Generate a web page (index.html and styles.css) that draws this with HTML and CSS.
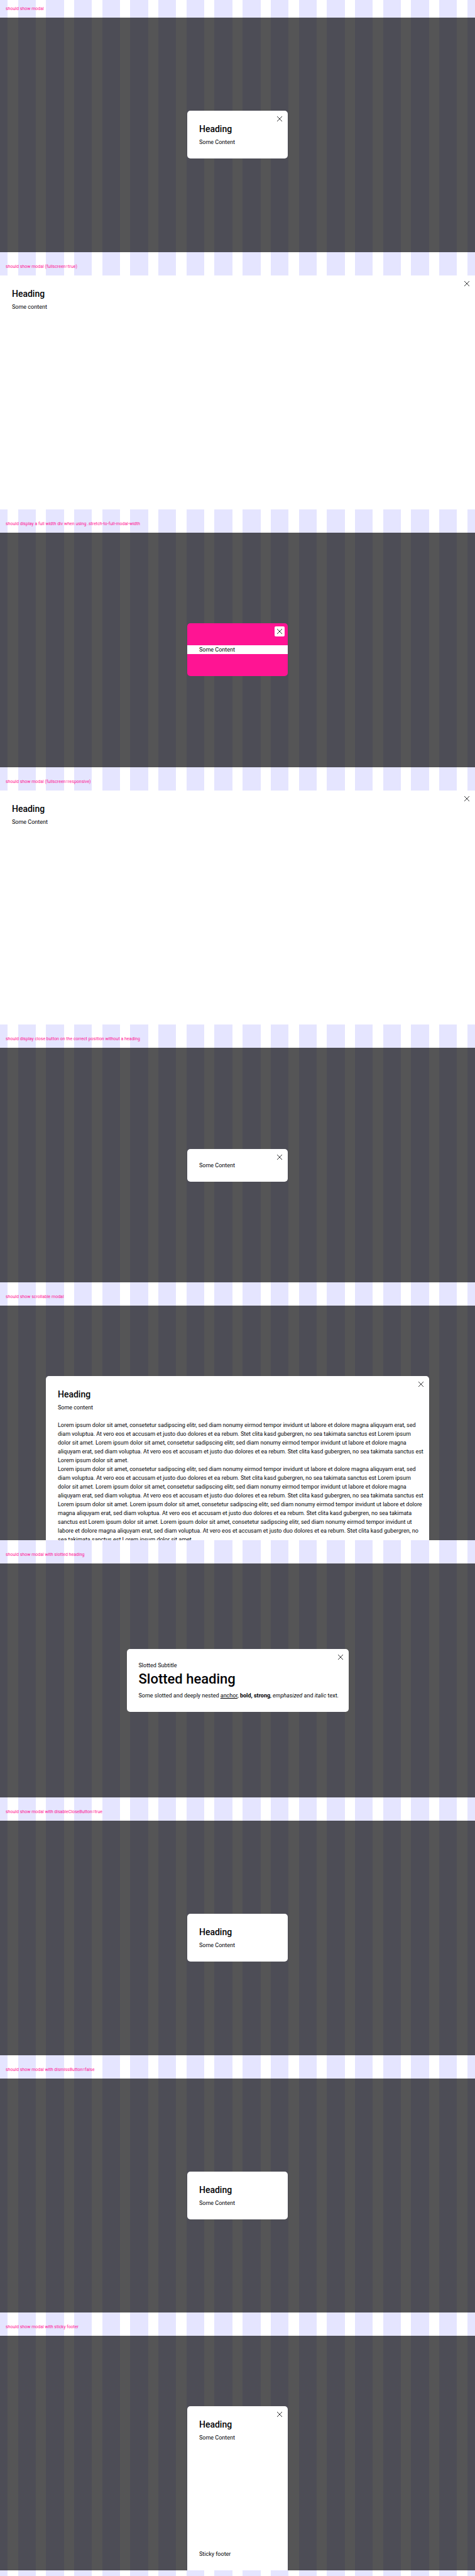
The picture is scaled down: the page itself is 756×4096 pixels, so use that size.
FILE: index.html
```html
<!DOCTYPE html>
<html lang="en">
<head>
<meta charset="utf-8">
<title>Modal states</title>
<link rel="stylesheet" href="styles.css">
</head>
<body>
<svg class="sprite" aria-hidden="true">
  <symbol id="close" viewBox="0 0 16 16"><path d="M4 4l8 8M12 4l-8 8" fill="none" stroke="currentColor" stroke-width="0.8"/></symbol>
</svg>
<main class="playground">
  <section class="case">
    <p class="case-label">should show modal</p>
    <div class="stage">
      <div class="modal" role="dialog" aria-label="Heading">
        <button class="close" type="button" aria-label="Close"><svg><use href="#close"/></svg></button>
        <h2 class="heading">Heading</h2>
        <p class="text">Some Content</p>
      </div>
    </div>
  </section>
  <section class="case">
    <p class="case-label">should show modal (fullscreen=true)</p>
    <div class="stage">
      <div class="modal modal-fullscreen" role="dialog" aria-label="Heading">
        <button class="close" type="button" aria-label="Close"><svg><use href="#close"/></svg></button>
        <h2 class="heading">Heading</h2>
        <p class="text">Some content</p>
      </div>
    </div>
  </section>
  <section class="case">
    <p class="case-label">should display a full width div when using .stretch-to-full-modal-width</p>
    <div class="stage">
      <div class="modal modal-stretch" role="dialog" aria-label="Stretched content">
        <button class="close" type="button" aria-label="Close"><svg><use href="#close"/></svg></button>
        <p class="text stretch">Some Content</p>
      </div>
    </div>
  </section>
  <section class="case">
    <p class="case-label">should show modal (fullscreen=responsive)</p>
    <div class="stage">
      <div class="modal modal-fullscreen" role="dialog" aria-label="Heading">
        <button class="close" type="button" aria-label="Close"><svg><use href="#close"/></svg></button>
        <h2 class="heading">Heading</h2>
        <p class="text">Some Content</p>
      </div>
    </div>
  </section>
  <section class="case">
    <p class="case-label">should display close button on the correct position without a heading</p>
    <div class="stage">
      <div class="modal" role="dialog" aria-label="Some Content">
        <button class="close" type="button" aria-label="Close"><svg><use href="#close"/></svg></button>
        <p class="text">Some Content</p>
      </div>
    </div>
  </section>
  <section class="case">
    <p class="case-label">should show scrollable modal</p>
    <div class="stage stage-overflow">
      <div class="modal modal-wide" role="dialog" aria-label="Heading">
        <button class="close" type="button" aria-label="Close"><svg><use href="#close"/></svg></button>
        <h2 class="heading">Heading</h2>
        <p class="text">Some content</p>
        <p class="text lorem">Lorem ipsum dolor sit amet, consetetur sadipscing elitr, sed diam nonumy eirmod tempor invidunt ut labore et dolore magna aliquyam erat, sed<br>diam voluptua. At vero eos et accusam et justo duo dolores et ea rebum. Stet clita kasd gubergren, no sea takimata sanctus est Lorem ipsum<br>dolor sit amet. Lorem ipsum dolor sit amet, consetetur sadipscing elitr, sed diam nonumy eirmod tempor invidunt ut labore et dolore magna<br>aliquyam erat, sed diam voluptua. At vero eos et accusam et justo duo dolores et ea rebum. Stet clita kasd gubergren, no sea takimata sanctus est<br>Lorem ipsum dolor sit amet.<br>Lorem ipsum dolor sit amet, consetetur sadipscing elitr, sed diam nonumy eirmod tempor invidunt ut labore et dolore magna aliquyam erat, sed<br>diam voluptua. At vero eos et accusam et justo duo dolores et ea rebum. Stet clita kasd gubergren, no sea takimata sanctus est Lorem ipsum<br>dolor sit amet. Lorem ipsum dolor sit amet, consetetur sadipscing elitr, sed diam nonumy eirmod tempor invidunt ut labore et dolore magna<br>aliquyam erat, sed diam voluptua. At vero eos et accusam et justo duo dolores et ea rebum. Stet clita kasd gubergren, no sea takimata sanctus est<br>Lorem ipsum dolor sit amet. Lorem ipsum dolor sit amet, consetetur sadipscing elitr, sed diam nonumy eirmod tempor invidunt ut labore et dolore<br>magna aliquyam erat, sed diam voluptua. At vero eos et accusam et justo duo dolores et ea rebum. Stet clita kasd gubergren, no sea takimata<br>sanctus est Lorem ipsum dolor sit amet. Lorem ipsum dolor sit amet, consetetur sadipscing elitr, sed diam nonumy eirmod tempor invidunt ut<br>labore et dolore magna aliquyam erat, sed diam voluptua. At vero eos et accusam et justo duo dolores et ea rebum. Stet clita kasd gubergren, no<br>sea takimata sanctus est Lorem ipsum dolor sit amet.</p>
      </div>
    </div>
  </section>
  <section class="case">
    <p class="case-label">should show modal with slotted heading</p>
    <div class="stage">
      <div class="modal modal-slotted" role="dialog" aria-label="Slotted heading">
        <button class="close" type="button" aria-label="Close"><svg><use href="#close"/></svg></button>
        <p class="text">Slotted Subtitle</p>
        <h2 class="heading-large">Slotted heading</h2>
        <p class="text">Some slotted and deeply nested <a class="link" href="#">anchor</a>, <b>bold, strong</b>, <em>emphasized</em> and <i>italic</i> text.</p>
      </div>
    </div>
  </section>
  <section class="case">
    <p class="case-label">should show modal with disableCloseButton=true</p>
    <div class="stage">
      <div class="modal" role="dialog" aria-label="Heading">
        <h2 class="heading">Heading</h2>
        <p class="text">Some Content</p>
      </div>
    </div>
  </section>
  <section class="case">
    <p class="case-label">should show modal with dismissButton=false</p>
    <div class="stage">
      <div class="modal" role="dialog" aria-label="Heading">
        <h2 class="heading">Heading</h2>
        <p class="text">Some Content</p>
      </div>
    </div>
  </section>
  <section class="case">
    <p class="case-label">should show modal with sticky footer</p>
    <div class="stage stage-overflow">
      <div class="modal modal-footer" role="dialog" aria-label="Heading">
        <button class="close" type="button" aria-label="Close"><svg><use href="#close"/></svg></button>
        <h2 class="heading">Heading</h2>
        <p class="text">Some Content</p>
        <footer class="text footer">Sticky footer</footer>
      </div>
    </div>
  </section>
</main>
</body>
</html>
```
FILE: styles.css
```css
* {
  box-sizing: border-box;
}

body,
p,
h2 {
  margin: 0;
}

body {
  color: #010205;
  font-family: Roboto, "Liberation Sans", sans-serif;
  font-size: 9px;
  line-height: 14px;
}

.sprite {
  position: absolute;
  width: 0;
  height: 0;
}

/* Column grid shown behind every case: 16 columns plus the outer margins. */
.playground {
  display: flex;
  flex-direction: column;
  min-height: 100vh;
  background: repeating-linear-gradient(
    90deg,
    #e5e5ff 0 1.62%,
    #fff 1.62% 3.77%,
    #e5e5ff 3.77% 5.913%
  );
}

.case {
  display: flex;
  flex: 1 0 0;
  flex-direction: column;
  padding-bottom: 9px;
}

.case-label {
  height: 28px;
  padding: 7px 9px;
  color: deeppink;
  font-size: 7px;
}

.stage {
  display: flex;
  flex: 1 0 0;
  align-items: center;
  justify-content: center;
  min-height: 0;
  overflow: hidden;
  background: rgba(1, 2, 3, 0.67);
}

.stage-overflow {
  align-items: stretch;
  padding-top: 112px;
}

.modal {
  position: relative;
  width: 160px;
  padding: 19px;
  border-radius: 5px;
  background: #fff;
}

.modal-fullscreen {
  align-self: stretch;
  width: 100%;
  border-radius: 0;
}

.modal-stretch {
  padding: 35px 19px;
  background: deeppink;
}

.modal-wide {
  width: 610px;
  border-radius: 5px 5px 0 0;
}

.modal-slotted {
  width: 353px;
  white-space: nowrap;
}

.modal-footer {
  display: flex;
  flex-direction: column;
  border-radius: 5px 5px 0 0;
}

.close {
  position: absolute;
  top: 5px;
  right: 5px;
  width: 16px;
  height: 16px;
  padding: 0;
  border: 0;
  border-radius: 2px;
  background: #fff;
  color: inherit;
}

.close svg {
  display: block;
  width: 16px;
  height: 16px;
}

.heading {
  margin-bottom: 4px;
  font-size: 14px;
  font-weight: 500;
  line-height: 20px;
}

.heading-large {
  margin-bottom: 4px;
  font-size: 22px;
  font-weight: 500;
  line-height: 30px;
}

.stretch {
  margin: 0 -19px;
  padding: 0 19px;
  background: #fff;
}

.lorem {
  margin-top: 14px;
  white-space: nowrap;
}

.link {
  color: inherit;
}

.footer {
  margin-top: auto;
}
```
